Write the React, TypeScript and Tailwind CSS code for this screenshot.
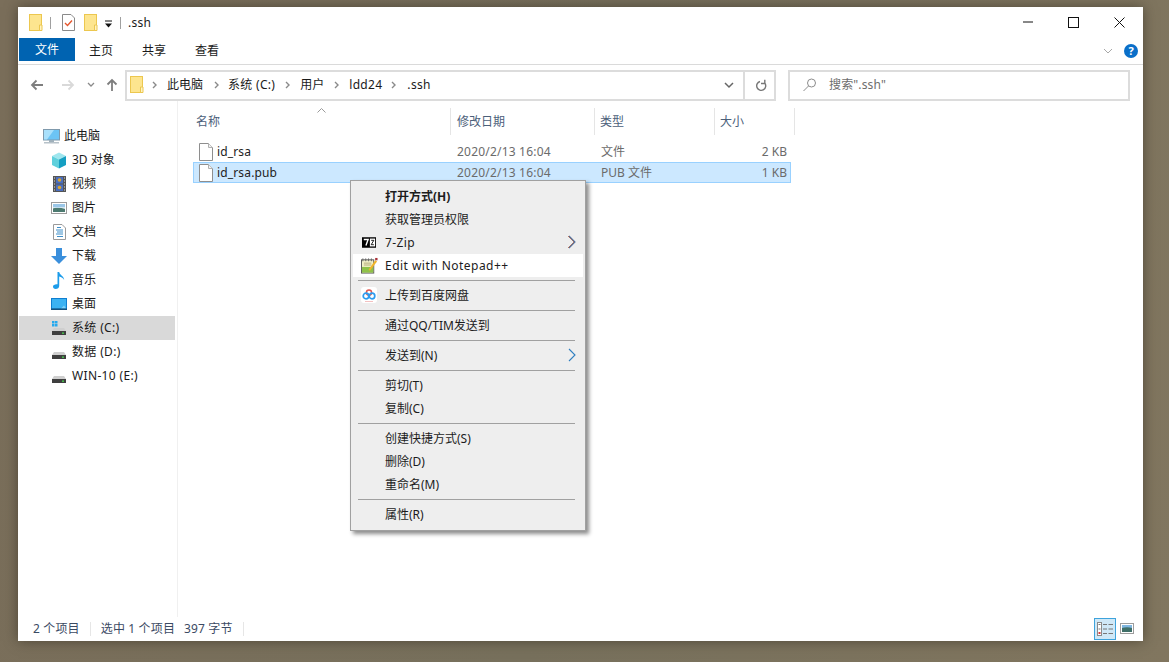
import React from "react";

const Folder = () => (
  <svg width="14" height="18" viewBox="0 0 14 18" className="shrink-0">
    <rect x="0.500" y="0.500" width="12" height="16" fill="#fde58f" stroke="#ecc74f" />
    <path d="M10.500 11v5.500h2.500V11z" fill="#fff3c4" stroke="#ecc74f" />
  </svg>
);

const Crumb = () => (
  <svg width="5" height="8" viewBox="0 0 5 8" className="shrink-0">
    <path d="M1 1l3 3-3 3" fill="none" stroke="#8a8a8a" strokeWidth="1.400" />
  </svg>
);

const Arrow = ({ color, dir }: { color: string; dir: "l" | "r" | "u" }) => (
  <svg width="14" height="14" viewBox="0 0 14 14" className="shrink-0">
    {dir === "l" && <path d="M13 7H2M6.500 2.500L2 7l4.500 4.500" fill="none" stroke={color} strokeWidth="1.800" />}
    {dir === "r" && <path d="M1 7h11M7.500 2.500L12 7l-4.500 4.500" fill="none" stroke={color} strokeWidth="1.800" />}
    {dir === "u" && <path d="M7 13V2M2.500 6.500L7 2l4.500 4.500" fill="none" stroke={color} strokeWidth="1.800" />}
  </svg>
);

const FileIcon = () => (
  <svg width="16" height="18" viewBox="0 0 16 18" className="shrink-0">
    <path d="M1.500 0.500h9l4 4v13h-13z" fill="#fff" stroke="#8e8e8e" />
    <path d="M10.500 0.500v4h4" fill="#f2f2f2" stroke="#b0b0b0" />
  </svg>
);

const Pc = () => (
  <svg width="17" height="15" viewBox="0 0 17 15">
    <rect x="0.500" y="0.500" width="16" height="10.500" fill="#6cc4f5" stroke="#7f99ac" />
    <path d="M1 1h10L4 10.500H1z" fill="#a9e0fb" />
    <rect x="6" y="11" width="5" height="2" fill="#9fb0bb" />
    <rect x="1" y="13" width="15" height="1.500" fill="#b7c2c9" />
  </svg>
);

const Cube = () => (
  <svg width="16" height="17" viewBox="0 0 16 17">
    <path d="M8 0.500l7 3.500-7 3.500L1 4z" fill="#9fe6ee" />
    <path d="M1 4l7 3.500V16.500L1 13z" fill="#5fd0dc" />
    <path d="M15 4L8 7.500V16.500L15 13z" fill="#159fc2" />
  </svg>
);

const Film = () => (
  <svg width="13" height="16" viewBox="0 0 13 16">
    <rect width="13" height="16" fill="#555" />
    <rect x="3" y="1" width="7" height="6.500" fill="#4a6fc0" />
    <rect x="3" y="8.500" width="7" height="6.500" fill="#4a6fc0" />
    <circle cx="6.500" cy="4" r="1.800" fill="#d9a531" />
    <circle cx="6.500" cy="11.500" r="1.800" fill="#d9a531" />
    <path d="M1 2h1M1 5h1M1 8h1M1 11h1M1 14h1M11 2h1M11 5h1M11 8h1M11 11h1M11 14h1" stroke="#ddd" />
  </svg>
);

const Pic = () => (
  <svg width="16" height="12" viewBox="0 0 16 12">
    <rect x="0.500" y="0.500" width="15" height="11" fill="#fff" stroke="#9c9c9c" />
    <rect x="2" y="2" width="12" height="4" fill="#9bc7e8" />
    <rect x="2" y="6" width="12" height="4" fill="#4c7a70" />
    <path d="M2 6.500c4-2 8-1 12 .5V5H2z" fill="#d7e6ee" />
  </svg>
);

const Doc = () => (
  <svg width="13" height="16" viewBox="0 0 13 16">
    <path d="M.5.500h8.500l3.500 3.500v11.500H.5z" fill="#fff" stroke="#9a9a9a" />
    <path d="M4 3.500h4M3 6h7M4 8h6M3 10h7M4 12.500h6" stroke="#3f8fc9" />
  </svg>
);

const Down = () => (
  <svg width="16" height="16" viewBox="0 0 16 16">
    <path d="M5 0h6v8h5l-8 8-8-8h5z" fill="#3a8fdc" />
  </svg>
);

const Music = () => (
  <svg width="12" height="17" viewBox="0 0 12 17">
    <path d="M4.500 0h1.700c.3 3 5 4 5 8-.8-2-3-3-5-3.500V14c0 1.800-1.700 3-3.500 3S0 16 0 14.500 2 12 4.500 12.300z" fill="#1c9cea" />
  </svg>
);

const Desk = () => (
  <svg width="16" height="12" viewBox="0 0 16 12">
    <rect width="16" height="12" fill="#0f7ed0" />
    <rect x="1" y="1" width="14" height="9.500" fill="#3bb2f2" />
    <path d="M10 10.500l3-3 2 3z" fill="#7fd1f7" />
    <rect y="10.500" width="16" height="1.500" fill="#15527f" />
  </svg>
);

const Drive = ({ win }: { win?: boolean }) => (
  <svg width="14" height="14" viewBox="0 0 14 14">
    {win && <path d="M0 0h2.500v2.500H0zM3 0h2.500v2.500H3zM0 3h2.500v2.500H0zM3 3h2.500v2.500H3z" fill="#25a9ee" />}
    <path d="M2 7h10l2 3H0z" fill="#cfcfcf" />
    <rect y="10" width="14" height="4" fill="#3f3f3f" />
    <rect x="10" y="11.500" width="2" height="1.300" fill="#49d24e" />
  </svg>
);

const nav: { icon: React.ReactNode; label: string; active?: boolean; wide?: boolean }[] = [
  { icon: <Cube />, label: "3D 对象" },
  { icon: <Film />, label: "视频" },
  { icon: <Pic />, label: "图片" },
  { icon: <Doc />, label: "文档" },
  { icon: <Down />, label: "下载" },
  { icon: <Music />, label: "音乐" },
  { icon: <Desk />, label: "桌面" },
  { icon: <Drive win />, label: "系统 (C:)", active: true, wide: true },
  { icon: <Drive />, label: "数据 (D:)", wide: true },
  { icon: <Drive />, label: "WIN-10 (E:)", wide: true },
];

const MenuItem = ({
  label,
  bold,
  icon,
  sub,
  subBlue,
  hover,
  textClass,
}: {
  label: string;
  bold?: boolean;
  icon?: React.ReactNode;
  sub?: boolean;
  subBlue?: boolean;
  hover?: boolean;
  textClass?: string;
}) => (
  <div className={`relative h-[23px] flex items-center pl-[32px] ${hover ? "bg-white" : ""} ${bold ? "font-bold" : ""}`}>
    {icon && <span className="absolute left-[7px] top-[2px] w-[18px] h-[18px] flex items-center justify-center">{icon}</span>}
    <span className={textClass}>{label}</span>
    {sub && (
      <svg width="9" height="14" viewBox="0 0 9 14" className="absolute right-[7px] top-[4px]">
        {!subBlue && <path d="M1 1l6 6-6 6" fill="none" stroke="#d0764f" strokeWidth="1" />}
        <path d="M2 1l6 6-6 6" fill="none" stroke={subBlue ? "#2f7fc1" : "#4f6f9c"} strokeWidth="1.100" />
      </svg>
    )}
  </div>
);

const Sep = () => (
  <div className="h-[7px] flex items-center pl-[5px] pr-[8px]">
    <div className="h-px w-full bg-[#a0a0a0]" />
  </div>
);

const SevenZip = () => (
  <svg width="14" height="11" viewBox="0 0 16 12">
    <rect width="16" height="12" fill="#000" />
    <path d="M2 2.500h5L4.500 9.500" fill="none" stroke="#fff" strokeWidth="1.600" />
    <rect x="9" y="1.500" width="6" height="9" fill="#fff" />
    <path d="M10.500 3.500h3l-3 5h3" fill="none" stroke="#000" />
  </svg>
);

const Npp = () => (
  <svg width="17" height="17" viewBox="0 0 18 17">
    <rect x="0.500" y="2.500" width="13" height="14" fill="#f3f1c8" stroke="#555" />
    <rect x="1" y="10" width="12" height="6" fill="#8fc24a" />
    <path d="M2 1v3M5 1v3M8 1v3M11 1v3" stroke="#666" />
    <path d="M3 6h8M3 8h8" stroke="#b0a878" />
    <path d="M8 13l7-10 2 1.300-7.500 9.700z" fill="#f0b429" />
    <rect x="15" y="0.500" width="2.500" height="2.500" fill="#a8323a" />
  </svg>
);

const Baidu = () => (
  <svg width="16" height="16" viewBox="0 0 16 16">
    <rect width="16" height="16" rx="3" fill="#ffffff" />
    <circle cx="8" cy="5.500" r="2.600" fill="none" stroke="#e0584f" strokeWidth="1.500" />
    <circle cx="5" cy="9" r="2.800" fill="none" stroke="#2d9cf0" strokeWidth="1.700" />
    <circle cx="11" cy="9" r="2.800" fill="none" stroke="#2d9cf0" strokeWidth="1.700" />
    <path d="M4 14.500h8" stroke="#f3c1c1" />
  </svg>
);

export default function App() {
  return (
    <div className="w-[1169px] h-[662px] overflow-hidden pl-[18px] pt-[7px] bg-[linear-gradient(100deg,#7a6e5a,#77705c_50%,#81765f)] font-['Noto_Sans','Noto_Sans_CJK_SC',sans-serif] text-[12px] text-[#1a1a1a]">
      <div className="relative w-[1125px] h-[634px] bg-white flex flex-col shadow-[0_0_12px_rgba(40,35,25,0.55)]">
        {/* Title bar */}
        <div className="h-[30px] flex items-center shrink-0">
          <div className="ml-[11px] mt-[1px]"><Folder /></div>
          <div className="ml-[7px] mt-[2px] w-px h-[12px] bg-[#a0a0a0]" />
          <svg width="13" height="17" viewBox="0 0 13 17" className="ml-[11px] mt-[1px]">
            <path d="M.5.500h8.500l3.500 3.500v12.500H.5z" fill="#fff" stroke="#8a8a8a" />
            <path d="M3 9l2.500 2.500L10 6.500" fill="none" stroke="#e4572e" strokeWidth="1.400" />
          </svg>
          <div className="ml-[9px] mt-[1px]"><Folder /></div>
          <svg width="9" height="9" viewBox="0 0 9 9" className="ml-[6px] mt-[5px]">
            <path d="M1 1h7" stroke="#111" />
            <path d="M1 3.500h7L4.500 7.500z" fill="#111" />
          </svg>
          <div className="ml-[7px] mt-[2px] w-px h-[12px] bg-[#a0a0a0]" />
          <span className="ml-[7px] mt-[2px] tracking-[0.3px]">.ssh</span>
          <div className="ml-auto flex items-center mr-[18px]">
            <svg width="10" height="2" viewBox="0 0 10 2"><path d="M0 1h10" stroke="#111" /></svg>
            <svg width="11" height="11" viewBox="0 0 11 11" className="ml-[35px]"><rect x="0.500" y="0.500" width="10" height="10" fill="none" stroke="#111" /></svg>
            <svg width="11" height="11" viewBox="0 0 11 11" className="ml-[35px]"><path d="M.5.500l10 10M10.500.500l-10 10" stroke="#111" /></svg>
          </div>
        </div>
        {/* Tabs */}
        <div className="h-[27px] flex items-start shrink-0 border-b border-[#dadada] box-content">
          <div className="ml-px w-[56px] h-[23px] mt-px pt-[1px] bg-[#0063b1] text-white flex items-center justify-center text-[12px]">文件</div>
          <div className="ml-[14px] mt-[2px] h-[23px] flex items-center">主页</div>
          <div className="ml-[29px] mt-[2px] h-[23px] flex items-center">共享</div>
          <div className="ml-[29px] mt-[2px] h-[23px] flex items-center">查看</div>
          <div className="ml-auto mr-[5px] flex items-center mt-[7px]">
            <svg width="10" height="6" viewBox="0 0 10 6"><path d="M1 1l4 4 4-4" fill="none" stroke="#a8a8a8" /></svg>
            <div className="ml-[11px] w-[14px] h-[14px] rounded-full bg-[#0a6fc9] text-white font-bold text-[11px] leading-[14px] text-center">?</div>
          </div>
        </div>
        {/* Nav row */}
        <div className="h-[36px] flex items-center shrink-0 pt-[4px]">
          <div className="ml-[12px]"><Arrow color="#7e7e7e" dir="l" /></div>
          <div className="ml-[17px]"><Arrow color="#d9d9d9" dir="r" /></div>
          <svg width="8" height="6" viewBox="0 0 8 6" className="ml-[12px]"><path d="M1 1l3 3 3-3" fill="none" stroke="#8a8a8a" strokeWidth="1.300" /></svg>
          <div className="ml-[10px]"><Arrow color="#7e7e7e" dir="u" /></div>
          <div className="ml-[6px] w-[651px] h-[31px] border-2 border-[#dcdcdc] flex items-center">
            <div className="ml-[3px]"><Folder /></div>
            <div className="ml-[8px]"><Crumb /></div>
            <span className="ml-[10px]">此电脑</span>
            <div className="ml-[11px]"><Crumb /></div>
            <span className="ml-[9px] tracking-[0.3px]">系统 (C:)</span>
            <div className="ml-[10px]"><Crumb /></div>
            <span className="ml-[10px]">用户</span>
            <div className="ml-[10px]"><Crumb /></div>
            <span className="ml-[10px] tracking-[0.3px]">ldd24</span>
            <div className="ml-[9px]"><Crumb /></div>
            <span className="ml-[11px] tracking-[0.3px]">.ssh</span>
            <svg width="10" height="7" viewBox="0 0 10 7" className="ml-auto mr-[9px]"><path d="M1 1l4 4 4-4" fill="none" stroke="#666" strokeWidth="1.500" /></svg>
            <div className="w-[31px] h-full border-l-2 border-[#dcdcdc] flex items-center justify-center pl-[2px]">
              <svg width="12" height="13" viewBox="0 0 12 13"><path d="M5 2.500a4.500 4.500 0 1 0 4.700 1.500M9.800 .8v3.700H6" fill="none" stroke="#777" strokeWidth="1.400" /></svg>
            </div>
          </div>
          <div className="ml-[12px] w-[342px] h-[31px] border-2 border-[#dcdcdc] flex items-center text-[#6d6d6d]">
            <svg width="14" height="14" viewBox="0 0 14 14" className="ml-[13px]">
              <circle cx="8.500" cy="5" r="4" fill="none" stroke="#8c8c8c" />
              <path d="M5.500 8l-5 5" stroke="#8c8c8c" />
            </svg>
            <span className="ml-[12px] tracking-[0.15px]">搜索".ssh"</span>
          </div>
        </div>
        {/* Body */}
        <div className="flex flex-1 min-h-0">
          <div className="w-[160px] shrink-0 border-r border-[#f0f0f0] pt-[23px]">
            <div className="h-[24px] flex items-center pl-[25px] gap-[4px] w-[156px]">
              <Pc /><span>此电脑</span>
            </div>
            {nav.map((n) => (
              <div key={n.label} className={`h-[24px] flex items-center w-[156px] ml-px pl-[32px] ${n.active ? "bg-[#d9d9d9]" : ""}`}>
                <span className="w-[16px] flex justify-center shrink-0">{n.icon}</span>
                <span className={`ml-[5px] ${n.wide ? "tracking-[0.35px]" : ""}`}>{n.label}</span>
              </div>
            ))}
          </div>
          <div className="flex-1 min-w-0 pt-[7px] pl-[15px] relative">
            <div className="flex h-[27px] w-[602px] text-[#4c607a]">
              <div className="relative w-[258px] border-r border-[#e5e5e5] pl-[3px] flex items-center">
                名称
                <svg width="9" height="5" viewBox="0 0 9 5" className="absolute left-[124px] top-0"><path d="M.5 4.500l4-4 4 4" fill="none" stroke="#9a9a9a" /></svg>
              </div>
              <div className="w-[144px] border-r border-[#e5e5e5] pl-[6px] flex items-center">修改日期</div>
              <div className="w-[120px] border-r border-[#e5e5e5] pl-[5px] flex items-center">类型</div>
              <div className="w-[80px] border-r border-[#e5e5e5] pl-[5px] flex items-center">大小</div>
            </div>
            <div className="mt-[6px] w-[598px]">
              <div className="h-[21px] flex items-center border border-transparent">
                <div className="w-[257px] flex items-center pl-[4px]"><FileIcon /><span className="ml-[3px] text-[#222] tracking-[0.15px]">id_rsa</span></div>
                <div className="w-[150px] pl-[6px] text-[#6b6b6b] tracking-[0.2px]">2020/2/13 16:04</div>
                <div className="w-[100px] text-[#6b6b6b]">文件</div>
                <div className="flex-1 text-right pr-[3px] text-[#6b6b6b]">2 KB</div>
              </div>
              <div className="h-[21px] flex items-center border border-[#99d1ff] bg-[#cce8ff]">
                <div className="w-[257px] flex items-center pl-[4px]"><FileIcon /><span className="ml-[3px] text-[#222] tracking-[0.15px]">id_rsa.pub</span></div>
                <div className="w-[150px] pl-[6px] text-[#6b6b6b] tracking-[0.2px]">2020/2/13 16:04</div>
                <div className="w-[100px] text-[#6b6b6b]">PUB 文件</div>
                <div className="flex-1 text-right pr-[3px] text-[#6b6b6b]">1 KB</div>
              </div>
            </div>
          </div>
        </div>
        {/* Status bar */}
        <div className="h-[24px] shrink-0 flex items-center text-[#3b4a63] relative">
          <span className="ml-[15px] tracking-[0.15px]">2 个项目</span>
          <div className="ml-[10px] w-px h-[14px] bg-[#e6e6e6]" />
          <span className="ml-[10px] tracking-[0.15px]">选中 1 个项目</span>
          <span className="ml-[9px] tracking-[0.15px]">397 字节</span>
          <div className="ml-[10px] w-px h-[14px] bg-[#e6e6e6]" />
          <div className="ml-auto flex items-center mr-[9px] mb-[1px]">
            <div className="w-[22px] h-[22px] border border-[#3ea3dc] bg-[#cfe8f7] flex items-center justify-center">
              <svg width="16" height="14" viewBox="0 0 16 14">
                <rect x="0.500" y="0.500" width="4" height="13" fill="#fff" stroke="#8a8a8a" />
                <path d="M1.500 2.500h2M1.500 7h2" stroke="#777" />
                <rect x="1.500" y="10" width="2" height="2" fill="#d83b3b" />
                <path d="M6 2.500h4M11.500 2.500H16M6 7h4M11.500 7H16M6 11.500h4M11.500 11.500H16" stroke="#777" />
              </svg>
            </div>
            <svg width="14" height="11" viewBox="0 0 14 11" className="ml-[4px]">
              <rect x="0.500" y="0.500" width="13" height="10" fill="#fff" stroke="#9c9c9c" />
              <rect x="2" y="2" width="10" height="3" fill="#7fb6e0" />
              <path d="M2 5c3-1 7-1 10 0v4H2z" fill="#3f6f68" />
            </svg>
          </div>
        </div>
        {/* Context menu */}
        <div className="absolute left-[332px] top-[173px] w-[236px] h-[351px] bg-[#eeeeee] border border-[#a0a0a0] py-[4px] px-[2px] text-[#1c1c1c] shadow-[3px_3px_4px_rgba(0,0,0,0.45)]">
          <MenuItem label="打开方式(H)" bold />
          <MenuItem label="获取管理员权限" />
          <MenuItem label="7-Zip" icon={<SevenZip />} sub textClass="tracking-[0.4px]" />
          <MenuItem label="Edit with Notepad++" icon={<Npp />} hover textClass="tracking-[0.47px]" />
          <Sep />
          <MenuItem label="上传到百度网盘" icon={<Baidu />} />
          <Sep />
          <MenuItem label="通过QQ/TIM发送到" />
          <Sep />
          <MenuItem label="发送到(N)" sub subBlue />
          <Sep />
          <MenuItem label="剪切(T)" />
          <MenuItem label="复制(C)" />
          <Sep />
          <MenuItem label="创建快捷方式(S)" />
          <MenuItem label="删除(D)" />
          <MenuItem label="重命名(M)" />
          <Sep />
          <MenuItem label="属性(R)" />
        </div>
      </div>
    </div>
  );
}
